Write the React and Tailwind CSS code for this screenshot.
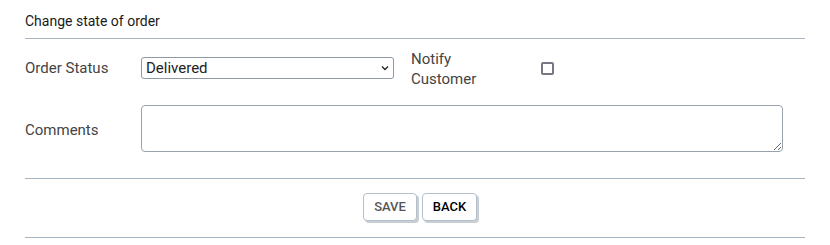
import React, { useState } from 'react'

function App() {
  const [status, setStatus] = useState('Delivered')
  const [notify, setNotify] = useState(false)
  const [comments, setComments] = useState('')

  return (
    <div className="px-[25px] pt-[10px] text-[15px] text-[#222] bg-white" style={{ fontFamily: 'Roboto, "Liberation Sans", sans-serif' }}>
      <h2 className="h-[22px] leading-[22px] text-[14px] font-normal text-[#1a1a1a]">Change state of order</h2>
      <div className="mt-[6px] border-t border-[#a7b4c2]" />

      {/* status + notify */}
      <div className="mt-[9px] h-[40px] flex items-center">
        <label htmlFor="status" className="w-[116px] text-[#444]">Order Status</label>
        <div className="relative w-[253px] h-[22px]">
          <select
            id="status"
            value={status}
            onChange={(e) => setStatus(e.target.value)}
            className="appearance-none w-full h-full pl-[4px] pr-6 border border-[#8f99a3] rounded-[3px] bg-white text-[15px] font-normal text-[#222] leading-[20px] focus:outline-none"
          >
            <option>Pending</option>
            <option>Processing</option>
            <option>Delivered</option>
          </select>
          <svg className="absolute right-[5px] top-[8px] pointer-events-none" width="8" height="6" viewBox="0 0 8 6">
            <path d="M1 1.5 L4 4.5 L7 1.5" fill="none" stroke="#222" strokeWidth="1.3" />
          </svg>
        </div>
        <label htmlFor="notify" className="ml-[17px] w-[130px] leading-[20px] text-[#444] pt-[1px]">Notify<br />Customer</label>
        <input
          id="notify"
          type="checkbox"
          checked={notify}
          onChange={(e) => setNotify(e.target.checked)}
          className="appearance-none w-[13px] h-[13px] m-0 border-2 border-[#777781] rounded-[2px] bg-white checked:bg-[#777781]"
        />
      </div>

      {/* comments */}
      <div className="mt-[17px] flex items-center">
        <label htmlFor="comments" className="w-[116px] text-[#444] pt-[3px]">Comments</label>
        <textarea
          id="comments"
          value={comments}
          onChange={(e) => setComments(e.target.value)}
          className="w-[642px] h-[47px] border border-[#98a3ae] rounded-[4px] bg-white focus:outline-none"
        />
      </div>

      <div className="mt-[26px] border-t border-[#a7b4c2]" />
      <div className="mt-[14px] flex justify-center gap-[5px] pl-[10px]">
        <button className="w-[54px] h-[28px] bg-white border border-[#b3bfcb] rounded-[4px] shadow-[2px_2px_0_#c9ced4] text-[13px] font-medium text-[#555]">SAVE</button>
        <button className="w-[55px] h-[28px] bg-white border border-[#b3bfcb] rounded-[4px] shadow-[2px_2px_0_#c9ced4] text-[13px] font-medium text-black">BACK</button>
      </div>
      <div className="mt-[16px] border-t border-[#a7b4c2]" />
    </div>
  )
}

export default App
